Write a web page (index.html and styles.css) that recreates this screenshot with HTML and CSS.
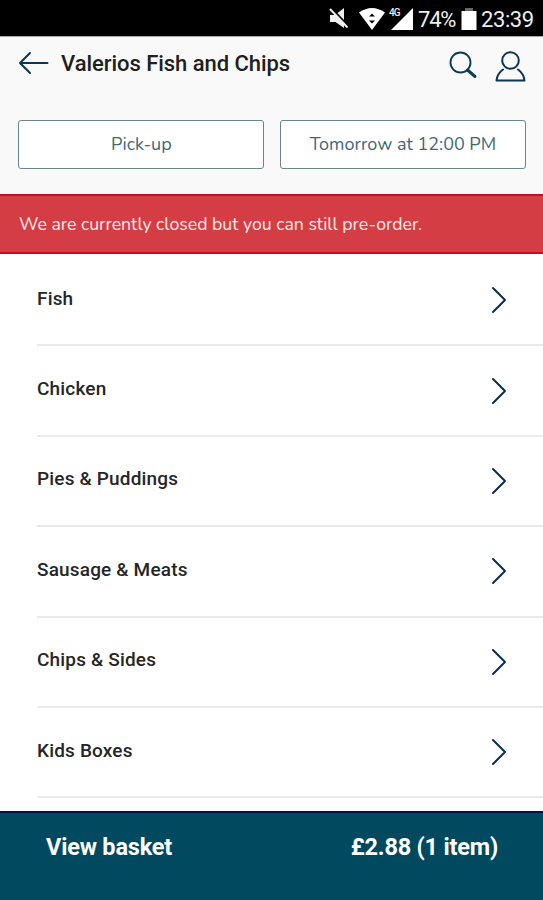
FILE: index.html
```html
<!DOCTYPE html>
<html lang="en">
<head>
<meta charset="utf-8">
<title>Valerios Fish and Chips</title>
<link rel="stylesheet" href="styles.css">
</head>
<body>
<div class="app">
  <div class="status">
    <svg class="mute" width="20" height="22" viewBox="0 0 20 22"><path d="M1 7h5l9-7v20L6.500 14H1z" fill="#eee"/><path d="M1 -1L20 19" stroke="#000" stroke-width="2.500"/><path d="M1 1L18.500 19.500" stroke="#eee" stroke-width="2"/></svg>
    <svg class="wifi" width="26" height="22" viewBox="0 0 26 22"><path d="M0 4.500Q13-4.500 26 4.500L13 22z" fill="#fff"/><path d="M10 8.500l3-3 3 3zM10 12.500l3 3 3-3z" fill="#000"/></svg>
    <div class="signal"><span class="net">4G</span><svg width="22" height="22" viewBox="0 0 22 22"><path d="M22 0v22H0z" fill="#fff"/></svg></div>
    <span class="percent">74%</span>
    <svg class="battery" width="16" height="22" viewBox="0 0 16 22"><path d="M4 0h8v3H4z" fill="#666"/><path d="M.5 3h15v19H.5z" fill="#fff"/></svg>
    <span class="clock">23:39</span>
  </div>
  <header class="header">
    <svg class="back" width="32" height="24" viewBox="0 0 32 24"><path d="M12 2L2 12l10 10M2 12h27.500" fill="none" stroke="#073659" stroke-width="2" stroke-linecap="round" stroke-linejoin="round"/></svg>
    <h1 class="title"><span>Valerios Fish and Chips</span></h1>
    <svg class="search" width="30" height="30" viewBox="0 0 30 30"><circle cx="12.500" cy="11.500" r="10" fill="none" stroke="#0b3c58" stroke-width="1.900"/><path d="M19.500 19l7.500 6.500" stroke="#0b3c58" stroke-width="3" stroke-linecap="round"/></svg>
    <svg class="user" width="32" height="32" viewBox="0 0 32 32"><g fill="none" stroke="#0b3455" stroke-width="2" stroke-linejoin="round" stroke-linecap="round"><circle cx="16.500" cy="9.500" r="8.300"/><path d="M9 18.500C5.500 21 3 24.500 2.500 29.500h28C30 24.500 27.500 21 24 18.500"/></g></svg>
  </header>
  <div class="options">
    <button class="option pickup"><span>Pick-up</span></button>
    <button class="option time"><span>Tomorrow at 12:00 PM</span></button>
  </div>
  <div class="notice"><span>We are currently closed but you can still pre-order.</span></div>
  <main class="menu">
    <div class="row"><span>Fish</span><svg class="chev" width="20" height="30" viewBox="0 0 20 30"><path d="M4 3l12 12L4 27"/></svg></div>
    <div class="row"><span>Chicken</span><svg class="chev" width="20" height="30" viewBox="0 0 20 30"><path d="M4 3l12 12L4 27"/></svg></div>
    <div class="row"><span>Pies &amp; Puddings</span><svg class="chev" width="20" height="30" viewBox="0 0 20 30"><path d="M4 3l12 12L4 27"/></svg></div>
    <div class="row"><span>Sausage &amp; Meats</span><svg class="chev" width="20" height="30" viewBox="0 0 20 30"><path d="M4 3l12 12L4 27"/></svg></div>
    <div class="row"><span>Chips &amp; Sides</span><svg class="chev" width="20" height="30" viewBox="0 0 20 30"><path d="M4 3l12 12L4 27"/></svg></div>
    <div class="row"><span>Kids Boxes</span><svg class="chev" width="20" height="30" viewBox="0 0 20 30"><path d="M4 3l12 12L4 27"/></svg></div>
  </main>
  <footer class="basket"><span class="view">View basket</span><span class="total">£2.88 (1 item)</span></footer>
</div>
</body>
</html>
```
FILE: styles.css
```css
* { box-sizing: border-box; }
body { margin: 0; background: #fff; font-family: Roboto, sans-serif; }
.app { width: 543px; height: 900px; display: flex; flex-direction: column; overflow: hidden; background: #fff; }
svg { display: block; flex: none; }
span { white-space: nowrap; }

.status { flex: none; height: 36px; background: #000; color: #eee; display: flex; align-items: flex-start; padding: 8px 0 0 329px; font-size: 22px; line-height: 23px; }
.wifi { margin-left: 10px; }
.signal { position: relative; margin-left: 6px; }
.net { position: absolute; left: -2px; top: -1px; font-size: 10px; line-height: 12px; font-weight: 500; letter-spacing: -1px; }
.percent { margin-left: 5px; width: 38px; letter-spacing: -1.2px; }
.battery { margin-left: 5px; }
.clock { margin-left: 4px; letter-spacing: -0.4px; }

.header { flex: none; height: 84px; background: #f9f9f9; border-top: 1px solid #aaa; display: flex; align-items: flex-start; padding: 14px 17px 0 18px; }
.title { margin: 0 0 0 11px; flex: 1; font-size: 22px; line-height: 26px; font-weight: 500; letter-spacing: -0.05px; color: #202020; }
.search { margin-right: 16px; }

.options { flex: none; height: 74px; background: #f9f9f9; display: grid; grid-template-columns: 246px 246px; gap: 15.500px; padding: 0 18.400px; align-items: start; }
.option { height: 49px; padding: 0 0 2px; background: #fff; border: 1.500px solid #6c8589; border-radius: 3px; font-family: Nunito, Lato, sans-serif; font-size: 18px; color: #426777; }

.notice { flex: none; height: 60px; background: #d43d43; border-top: 2px solid #c90c22; border-bottom: 2px solid #c90c22; display: flex; align-items: center; padding: 0 19px 1px; color: #ffe9e8; font-family: Nunito, Lato, sans-serif; font-size: 17.700px; }

.menu { flex: none; height: 557px; padding: 2px 0 0 37px; }
.row { height: 90.400px; border-bottom: 2px solid #eaeaea; display: flex; align-items: center; justify-content: space-between; padding-right: 34px; font-size: 19px; letter-spacing: 0.17px; font-weight: 500; color: #262626; }
.row span { padding-bottom: 4px; }
.chev { fill: none; stroke: #0a2d50; stroke-width: 2; stroke-linecap: round; stroke-linejoin: round; }

.basket { flex: 1; background: #00495f; border-top: 2px solid #00144a; display: flex; justify-content: space-between; align-items: flex-start; padding: 20px 45px 0 46px; font-size: 23.500px; letter-spacing: -0.2px; line-height: 28px; font-weight: 700; color: #fff; }
```
